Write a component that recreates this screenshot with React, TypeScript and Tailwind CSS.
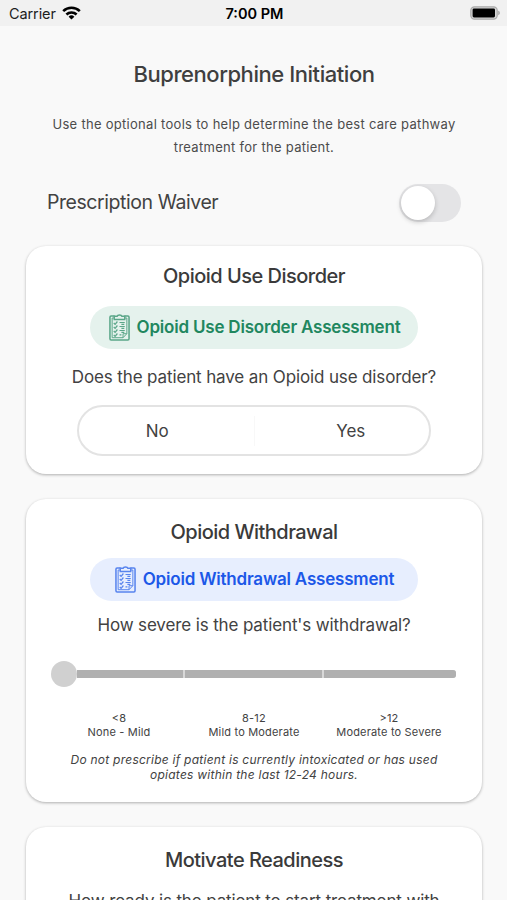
import type { ReactNode } from 'react';

export default function App() {
  return (
    <div className="h-[900px] w-[507px] overflow-hidden bg-[#f9f9f9] font-['Inter','Liberation_Sans',sans-serif] text-[#424242]">
      <StatusBar />
      <main className="flex flex-col pr-[25px] pl-[26px]">
        <h1 className="mt-[33px] text-center text-[22px] leading-[30px] font-medium tracking-[-0.45px] text-[#3f3f3f]">
          Buprenorphine Initiation
        </h1>
        <p className="mt-[24px] text-center text-[13px] leading-[23px] tracking-[0.29px] text-[#4c4c4c]">
          Use the optional tools to help determine the best care pathway
          <br />
          treatment for the patient.
        </p>
        <div className="mt-[24px] mb-[24px] flex h-[39px] items-center justify-between pr-[21px] pl-[21px]">
          <span className="text-[19.5px] tracking-[-0.44px]">Prescription Waiver</span>
          <Switch />
        </div>

        <div className="flex flex-col gap-[25px]">
          <Card className="h-[228px] pt-[15px]">
            <CardTitle>Opioid Use Disorder</CardTitle>
            <AssessmentButton className="mt-[15px] bg-[#e5f2ed] text-[#21875f]">
              Opioid Use Disorder Assessment
            </AssessmentButton>
            <Question className="mt-[15px]">Does the patient have an Opioid use disorder?</Question>
            <div className="mt-[15px] flex h-[51px] w-[354px] items-center rounded-full border-2 border-[#e3e3e3] text-[17px]">
              <button className="h-full flex-1 pt-[2px] pr-[18px]">No</button>
              <div className="h-[30px] w-px bg-[#f8f8f8]" />
              <button className="h-full flex-1 pt-[2px] pl-[18px]">Yes</button>
            </div>
          </Card>

          <Card className="h-[303px] pt-[18px]">
            <CardTitle>Opioid Withdrawal</CardTitle>
            <AssessmentButton className="mt-[11px] bg-[#e7eefe] text-[#1c58e8]">
              Opioid Withdrawal Assessment
            </AssessmentButton>
            <Question className="mt-[11px]">How severe is the patient's withdrawal?</Question>
            <Slider />
            <SeverityScale />
            <p className="mt-[13px] text-center text-[12px] leading-[15px] tracking-[0.25px] italic">
              Do not prescribe if patient is currently intoxicated or has used
              <br />
              opiates within the last 12-24 hours.
            </p>
          </Card>

          <Card className="h-[240px] pt-[18px]">
            <CardTitle>Motivate Readiness</CardTitle>
            <Question className="mt-[13px]">How ready is the patient to start treatment with</Question>
          </Card>
        </div>
      </main>
    </div>
  );
}

function StatusBar() {
  return (
    <header className="grid h-[26px] grid-cols-3 items-center bg-[#f1f1f1] pt-px pr-[7px] pl-[9px] text-[14.5px] text-[#1d1d1d]">
      <div className="flex items-center gap-[6px]">
        <span className="tracking-[-0.1px]">Carrier</span>
        <svg className="-mt-px" width="19" height="14" viewBox="0 0 19 14" fill="none" stroke="#000" strokeWidth="2.6">
          <path d="M1.2 5.1a12 12 0 0 1 16.6 0" />
          <path d="M4.4 8.5a7.4 7.4 0 0 1 10.2 0" />
          <path d="M9.5 13.6 6.6 10.7a4.2 4.2 0 0 1 5.8 0Z" fill="#000" stroke="none" />
        </svg>
      </div>
      <span className="text-center font-semibold text-black">7:00 PM</span>
      <svg className="-mt-px justify-self-end" width="30" height="14" viewBox="0 0 30 14">
        <rect x="0.8" y="0.8" width="26.4" height="12.4" rx="3.6" fill="#d6d6d6" stroke="#a9a9a9" strokeWidth="1.2" />
        <rect x="2.6" y="2.4" width="22.4" height="9" rx="1.4" fill="#000" />
        <path d="M28.2 4.8c2.2.6 2.2 3.8 0 4.4Z" fill="#a9a9a9" />
      </svg>
    </header>
  );
}

function Switch() {
  return (
    <button className="flex h-[38px] w-[62px] items-center rounded-full bg-[#e4e4e6] p-[2px]">
      <span className="size-[34px] rounded-full bg-white shadow-[0_2px_5px_rgba(0,0,0,0.2)]" />
    </button>
  );
}

function Card({ className, children }: { className: string; children: ReactNode }) {
  return (
    <section
      className={`flex shrink-0 flex-col items-center rounded-[20px] bg-white shadow-[0_1px_3px_rgba(0,0,0,0.3)] ${className}`}
    >
      {children}
    </section>
  );
}

function CardTitle({ children }: { children: ReactNode }) {
  return (
    <h2 className="h-[30px] text-[20px] leading-[30px] font-medium tracking-[-0.52px] text-[#3a3a3a]">{children}</h2>
  );
}

function Question({ className, children }: { className: string; children: ReactNode }) {
  return (
    <p className={`text-[17px] leading-[26px] tracking-[-0.13px] whitespace-nowrap ${className}`}>{children}</p>
  );
}

function AssessmentButton({ className, children }: { className: string; children: ReactNode }) {
  return (
    <button
      className={`flex h-[43px] w-[328px] items-center justify-center gap-[7px] rounded-full pl-px text-[17px] font-semibold tracking-[-0.2px] whitespace-nowrap ${className}`}
    >
      <ClipboardIcon />
      {children}
    </button>
  );
}

function ClipboardIcon() {
  return (
    <svg className="shrink-0" width="21" height="27" viewBox="0 0 22 27" preserveAspectRatio="none" fill="none" stroke="currentColor" opacity="0.7">
      <path d="M6 2H2.2Q1 2 1 3.2v21.6Q1 26 2.2 26h17.6q1.2 0 1.2-1.2V3.2Q21 2 19.8 2H16" strokeWidth="1.6" />
      <path d="M5.5 4H3.3v19.7h11.4l4-4V4h-2.2M14.7 23.7v-4h4" strokeWidth="1" />
      <path d="M5.5 5.6V2.3h3Q8.8 1 11 1t2.5 1.3h3v3.3Z" strokeWidth="1.5" />
      <path d="m5 9 1.4 1.4 2.4-2.9M5 13l1.4 1.4 2.4-2.9M5 17l1.4 1.4 2.4-2.9M5 21l1.4 1.4 2.4-2.9" strokeWidth="1.3" />
      <path d="M11 8.5h5.5M13 10.3h3M11 12.5h5.5M13 14.3h3M11 16.5h5.5M13 18.3h3M11 20.8h2" strokeWidth="1.2" />
    </svg>
  );
}

function Slider() {
  return (
    <div className="mt-[23px] mr-px flex h-[26px] w-[405px] items-center">
      <div className="size-[26px] shrink-0 rounded-full bg-[#d0d0d0]" />
      <div className="flex h-[8px] flex-1 gap-[2px] overflow-hidden rounded-r-[3px] bg-[#d8d8d8]">
        <div className="w-[106px] bg-[#b0b0b0]" />
        <div className="w-[137px] bg-[#b0b0b0]" />
        <div className="flex-1 bg-[#b0b0b0]" />
      </div>
    </div>
  );
}

function SeverityScale() {
  const levels = [
    { score: '<8', label: 'None - Mild' },
    { score: '8-12', label: 'Mild to Moderate' },
    { score: '>12', label: 'Moderate to Severe' },
  ];

  return (
    <div className="mt-[25px] grid w-[405px] grid-cols-3 text-center text-[11px] leading-[13.5px] tracking-[0.18px]">
      {levels.map((level) => (
        <div key={level.label}>
          <div>{level.score}</div>
          <div>{level.label}</div>
        </div>
      ))}
    </div>
  );
}
